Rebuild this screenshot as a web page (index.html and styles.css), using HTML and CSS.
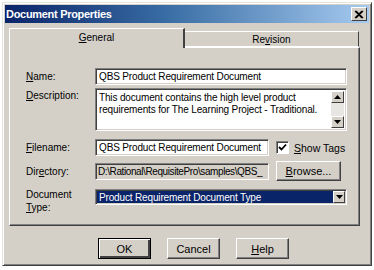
FILE: index.html
```html
<!DOCTYPE html>
<html lang="en">
<head>
<meta charset="UTF-8">
<title>Document Properties</title>
<link rel="stylesheet" href="styles.css">
</head>
<body>
<div class="dialog">
  <div class="titlebar">
    <span class="title">Document Properties</span>
    <span class="close">
      <svg width="10" height="9" viewBox="0 0 10 9"><path d="M1 1 L8 8 M2 1 L9 8 M8 1 L1 8 M9 1 L2 8" stroke="#000" stroke-width="1.2"/></svg>
    </span>
  </div>

  <div class="tabs">
    <div class="tab active"><u>G</u>eneral</div>
    <div class="tab">Re<u>v</u>ision</div>
  </div>

  <div class="panel">
    <div class="row row-name">
      <label class="lbl"><u>N</u>ame:</label>
      <div class="field wide">QBS Product Requirement Document</div>
    </div>
    <div class="row row-desc">
      <label class="lbl"><u>D</u>escription:</label>
      <div class="field wide area">
        <div class="area-text">This document contains the high level product requirements for The Learning Project - Traditional.</div>
        <div class="scrollbar">
          <div class="sbtn"><svg width="7" height="4" viewBox="0 0 7 4"><path d="M3.5 0 L7 4 L0 4 Z" fill="#000"/></svg></div>
          <div class="track"></div>
          <div class="sbtn"><svg width="7" height="4" viewBox="0 0 7 4"><path d="M0 0 L7 0 L3.5 4 Z" fill="#000"/></svg></div>
        </div>
      </div>
    </div>
    <div class="row row-file">
      <label class="lbl"><u>F</u>ilename:</label>
      <div class="field short">QBS Product Requirement Document</div>
      <div class="check">
        <span class="box"><svg width="9" height="9" viewBox="0 0 9 9"><path d="M1 4 L3.5 6.5 L8 1.5" stroke="#000" stroke-width="1.8" fill="none"/></svg></span>
        <span><u>S</u>how Tags</span>
      </div>
    </div>
    <div class="row row-dir">
      <label class="lbl">Dir<u>e</u>ctory:</label>
      <div class="field short readonly">D:\Rational\RequisitePro\samples\QBS_</div>
      <button class="btn browse"><u>B</u>rowse...</button>
    </div>
    <div class="row row-type">
      <label class="lbl">Document<br><u>T</u>ype:</label>
      <div class="field wide select">
        <span class="selected">Product Requirement Document Type</span>
        <span class="drop"><svg width="7" height="4" viewBox="0 0 7 4"><path d="M0 0 L7 0 L3.5 4 Z" fill="#000"/></svg></span>
      </div>
    </div>
  </div>

  <div class="buttons">
    <button class="btn default">OK</button>
    <button class="btn">Cancel</button>
    <button class="btn"><u>H</u>elp</button>
  </div>
</div>
</body>
</html>
```

FILE: styles.css
```css
body {
  margin: 0;
  padding: 2px;
  background-color: #ffffff;
  font-family: "Liberation Sans", Arial, sans-serif;
  font-size: 10px;
  color: #000;
}

.dialog {
  box-sizing: border-box;
  width: 370px;
  height: 264px;
  padding: 2px;
  background-color: #d4d0c8;
  border: 1px solid;
  border-color: #e6e4de #404040 #404040 #e6e4de;
  box-shadow: inset 1px 1px #ffffff, inset -1px -1px #808080;
}

.titlebar {
  height: 18px;
  display: flex;
  align-items: center;
  justify-content: space-between;
  padding: 0 2px 0 1px;
  background: linear-gradient(to right, #0a246a 0%, #3a6ea5 45%, #a6caf0 100%);
}

.title {
  color: #fff;
  font-weight: bold;
  font-size: 11px;
  letter-spacing: -0.3px;
}

.close {
  box-sizing: border-box;
  width: 16px;
  height: 14px;
  display: flex;
  align-items: center;
  justify-content: center;
  background-color: #d4d0c8;
  border: 1px solid;
  border-color: #fff #404040 #404040 #fff;
}

.tabs {
  display: flex;
  align-items: flex-end;
  margin: 5px 0 0 4px;
  height: 19px;
}

.tab {
  box-sizing: border-box;
  height: 16px;
  width: 174px;
  display: flex;
  align-items: center;
  justify-content: center;
  border-top: 1px solid #fff;
  border-right: 1px solid #404040;
  border-bottom: 1px solid #fff;
}

.tab.active {
  width: 176px;
  height: 20px;
  margin-bottom: -1px;
  border-left: 1px solid #fff;
  border-right: 2px solid #404040;
  border-bottom: none;
  background-color: #d4d0c8;
  position: relative;
  z-index: 1;
  padding-bottom: 2px;
}

.panel {
  box-sizing: border-box;
  width: 351px;
  height: 179px;
  margin-left: 4px;
  padding: 20px 0 0 16px;
  border: 1px solid;
  border-color: #fff #404040 #404040 #fff;
  box-shadow: inset -1px -1px #808080;
}

.row {
  display: flex;
  align-items: center;
}

.lbl {
  width: 69px;
  flex: none;
}

.field {
  box-sizing: border-box;
  height: 17px;
  padding: 0 3px;
  display: flex;
  align-items: center;
  white-space: nowrap;
  overflow: hidden;
  letter-spacing: -0.15px;
  background-color: #fff;
  border: 1px solid;
  border-color: #808080 #fff #fff #808080;
  box-shadow: inset 1px 1px #404040, inset -1px -1px #d4d0c8;
}

.field.wide { width: 252px; }
.field.short { width: 174px; }

.row-desc {
  margin-top: 3px;
  align-items: flex-start;
}

.row-desc .lbl { padding-top: 2px; }

.field.area {
  height: 43px;
  padding: 2px 2px 2px 3px;
  align-items: stretch;
  white-space: normal;
}

.area-text {
  flex: 1;
  line-height: 12px;
  padding-top: 1px;
}

.scrollbar {
  width: 13px;
  display: flex;
  flex-direction: column;
}

.sbtn {
  box-sizing: border-box;
  height: 12px;
  display: flex;
  align-items: center;
  justify-content: center;
  background-color: #d4d0c8;
  border: 1px solid;
  border-color: #fff #404040 #404040 #fff;
}

.track {
  flex: 1;
  background-color: #e8e6e2;
}

.row-file { margin-top: 8px; }

.check {
  display: flex;
  align-items: center;
  gap: 5px;
  margin-left: 7px;
  font-size: 10.5px;
}

.box {
  box-sizing: border-box;
  width: 13px;
  height: 13px;
  display: flex;
  align-items: center;
  justify-content: center;
  background-color: #fff;
  border: 1px solid;
  border-color: #808080 #fff #fff #808080;
  box-shadow: inset 1px 1px #404040;
}

.row-dir { margin-top: 5px; }

.field.readonly {
  background-color: #d4d0c8;
  padding-left: 2px;
  letter-spacing: -0.4px;
}

.btn {
  box-sizing: border-box;
  height: 21px;
  width: 53px;
  padding: 0;
  font-family: inherit;
  font-size: 11px;
  color: #000;
  background-color: #d4d0c8;
  border: 1px solid;
  border-color: #fff #404040 #404040 #fff;
  box-shadow: inset -1px -1px #808080;
}

.browse {
  width: 65px;
  height: 20px;
  margin-left: 7px;
}

.row-type {
  margin-top: 8px;
  align-items: flex-start;
}

.row-type .lbl { line-height: 13px; margin-top: -1px; }

.field.select {
  height: 16px;
  padding: 1px;
  justify-content: space-between;
}

.selected {
  flex: 1;
  height: 100%;
  display: flex;
  align-items: center;
  padding-left: 2px;
  background-color: #0a246a;
  color: #fff;
}

.drop {
  box-sizing: border-box;
  width: 12px;
  height: 100%;
  display: flex;
  align-items: center;
  justify-content: center;
  background-color: #d4d0c8;
  border: 1px solid;
  border-color: #fff #404040 #404040 #fff;
}

.buttons {
  display: flex;
  gap: 16px;
  margin: 12px 0 0 93px;
}

.btn.default {
  border: 1px solid #000;
  box-shadow: inset 1px 1px #fff, inset -2px -2px #404040;
}
```
